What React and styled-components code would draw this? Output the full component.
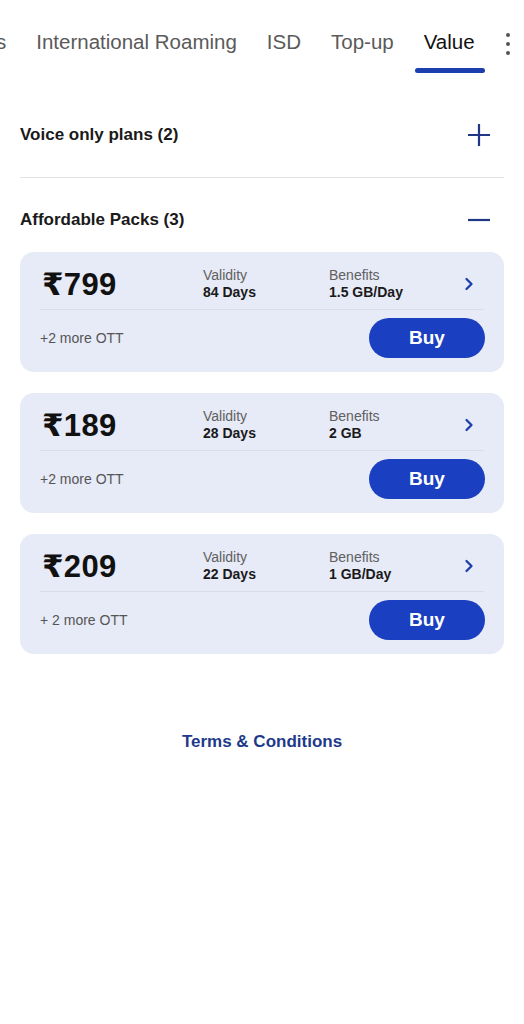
import React from 'react';
import styled, { createGlobalStyle } from 'styled-components';

const GlobalStyle = createGlobalStyle`
  body {
    margin: 0;
    background: #ffffff;
    font-family: "Liberation Sans", "Noto Sans", Arial, sans-serif;
  }
`;

const Page = styled.div`
  width: 524px;
  min-height: 1024px;
  background: #fff;
  overflow: hidden;
`;

const TabBar = styled.div`
  display: flex;
  align-items: flex-start;
  height: 72px;
  padding-top: 28px;
  box-sizing: border-box;
  margin-left: -4px;
  white-space: nowrap;
`;

const Tab = styled.div`
  position: relative;
  padding: ${props => (props.$edge ? '0 15px 0 0' : '0 15px')};
  font-size: 20.5px;
  line-height: 28px;
  color: ${props => (props.$active ? '#111' : '#5a5a5a')};
  height: 44px;

  &::after {
    content: '';
    display: ${props => (props.$active ? 'block' : 'none')};
    position: absolute;
    left: 6px;
    right: 5px;
    bottom: -1px;
    height: 5px;
    border-radius: 3px;
    background: #1b3fae;
  }
`;

const Kebab = styled.div`
  display: flex;
  flex-direction: column;
  gap: 5px;
  padding: 5px 0 0 16px;
`;

const Dot = styled.span`
  width: 4px;
  height: 4px;
  border-radius: 50%;
  background: #555;
`;

const Content = styled.div`
  padding: 0 20px;
`;

const Section = styled.div`
  display: flex;
  align-items: center;
  justify-content: space-between;
  box-sizing: border-box;
  height: ${props => props.$h}px;
  padding-top: ${props => props.$top}px;
  border-bottom: ${props => (props.$line ? '1px solid #e2e2e2' : 'none')};
`;

const SectionTitle = styled.div`
  font-size: 17px;
  font-weight: bold;
  color: #1a1a1a;
`;

const Toggle = styled.div`
  width: 24px;
  height: 24px;
  margin-right: 13px;
  display: flex;
  align-items: center;
  justify-content: center;
`;

const CardList = styled.div`
  display: flex;
  flex-direction: column;
  gap: 21px;
`;

const Card = styled.div`
  background: #e7eaf7;
  border-radius: 14px;
  height: 120px;
  padding: 0 20px;
  box-sizing: border-box;
  display: flex;
  flex-direction: column;
`;

const TopRow = styled.div`
  display: grid;
  grid-template-columns: 163px 126px 1fr 24px;
  align-items: center;
  height: 58px;
  padding-top: 7px;
  box-sizing: border-box;
  border-bottom: 1px solid #d9dced;
`;

const Price = styled.div`
  font-size: 31px;
  font-weight: bold;
  color: #111;
  padding-left: 2px;
  letter-spacing: 0.3px;
  font-family: "Liberation Sans", "DejaVu Sans", sans-serif;
`;

const Info = styled.div`
  display: flex;
  flex-direction: column;
`;

const Label = styled.span`
  font-size: 14px;
  color: #606060;
  line-height: 17px;
`;

const Value = styled.span`
  font-size: 14px;
  font-weight: bold;
  color: #1a1a1a;
  line-height: 17px;
`;

const BottomRow = styled.div`
  display: flex;
  align-items: center;
  justify-content: space-between;
  padding-top: 8px;
`;

const Extra = styled.span`
  font-size: 14px;
  color: #555;
`;

const BuyButton = styled.button`
  width: 116px;
  height: 40px;
  border: none;
  border-radius: 20px;
  background: #1a3fc0;
  color: #fff;
  font-size: 19px;
  font-weight: bold;
  font-family: "Liberation Sans", Arial, sans-serif;
  margin-right: -1px;
`;

const Terms = styled.div`
  text-align: center;
  margin-top: 78px;
  font-size: 17px;
  font-weight: bold;
  color: #1e3a8a;
`;

const plans = [
  { price: '₹799', validity: '84 Days', benefits: '1.5 GB/Day', extra: '+2 more OTT' },
  { price: '₹189', validity: '28 Days', benefits: '2 GB', extra: '+2 more OTT' },
  { price: '₹209', validity: '22 Days', benefits: '1 GB/Day', extra: '+ 2 more OTT' },
];

const Chevron = () => (
  <svg width="16" height="16" viewBox="0 0 16 16">
    <path d="M6.5 3 L11.5 8 L6.5 13" fill="none" stroke="#1b3fae" strokeWidth="2.3" strokeLinecap="round" strokeLinejoin="round" />
  </svg>
);

export default function App() {
  return (
    <Page>
      <GlobalStyle />
      <TabBar>
        <Tab $edge>s</Tab>
        <Tab>International Roaming</Tab>
        <Tab>ISD</Tab>
        <Tab>Top-up</Tab>
        <Tab $active>Value</Tab>
        <Kebab>
          <Dot />
          <Dot />
          <Dot />
        </Kebab>
      </TabBar>
      <Content>
        <Section $h={106} $top={21} $line>
          <SectionTitle>Voice only plans (2)</SectionTitle>
          <Toggle>
            <svg width="24" height="24" viewBox="0 0 24 24">
              <path d="M12 1 V23 M1 12 H23" stroke="#1f3785" strokeWidth="2.2" />
            </svg>
          </Toggle>
        </Section>
        <Section $h={74} $top={10}>
          <SectionTitle>Affordable Packs (3)</SectionTitle>
          <Toggle>
            <svg width="24" height="24" viewBox="0 0 24 24">
              <path d="M1 12 H23" stroke="#1f3785" strokeWidth="2.2" />
            </svg>
          </Toggle>
        </Section>
        <CardList>
          {plans.map(p => (
            <Card key={p.price}>
              <TopRow>
                <Price>{p.price}</Price>
                <Info>
                  <Label>Validity</Label>
                  <Value>{p.validity}</Value>
                </Info>
                <Info>
                  <Label>Benefits</Label>
                  <Value>{p.benefits}</Value>
                </Info>
                <Chevron />
              </TopRow>
              <BottomRow>
                <Extra>{p.extra}</Extra>
                <BuyButton>Buy</BuyButton>
              </BottomRow>
            </Card>
          ))}
        </CardList>
        <Terms>Terms &amp; Conditions</Terms>
      </Content>
    </Page>
  );
}
